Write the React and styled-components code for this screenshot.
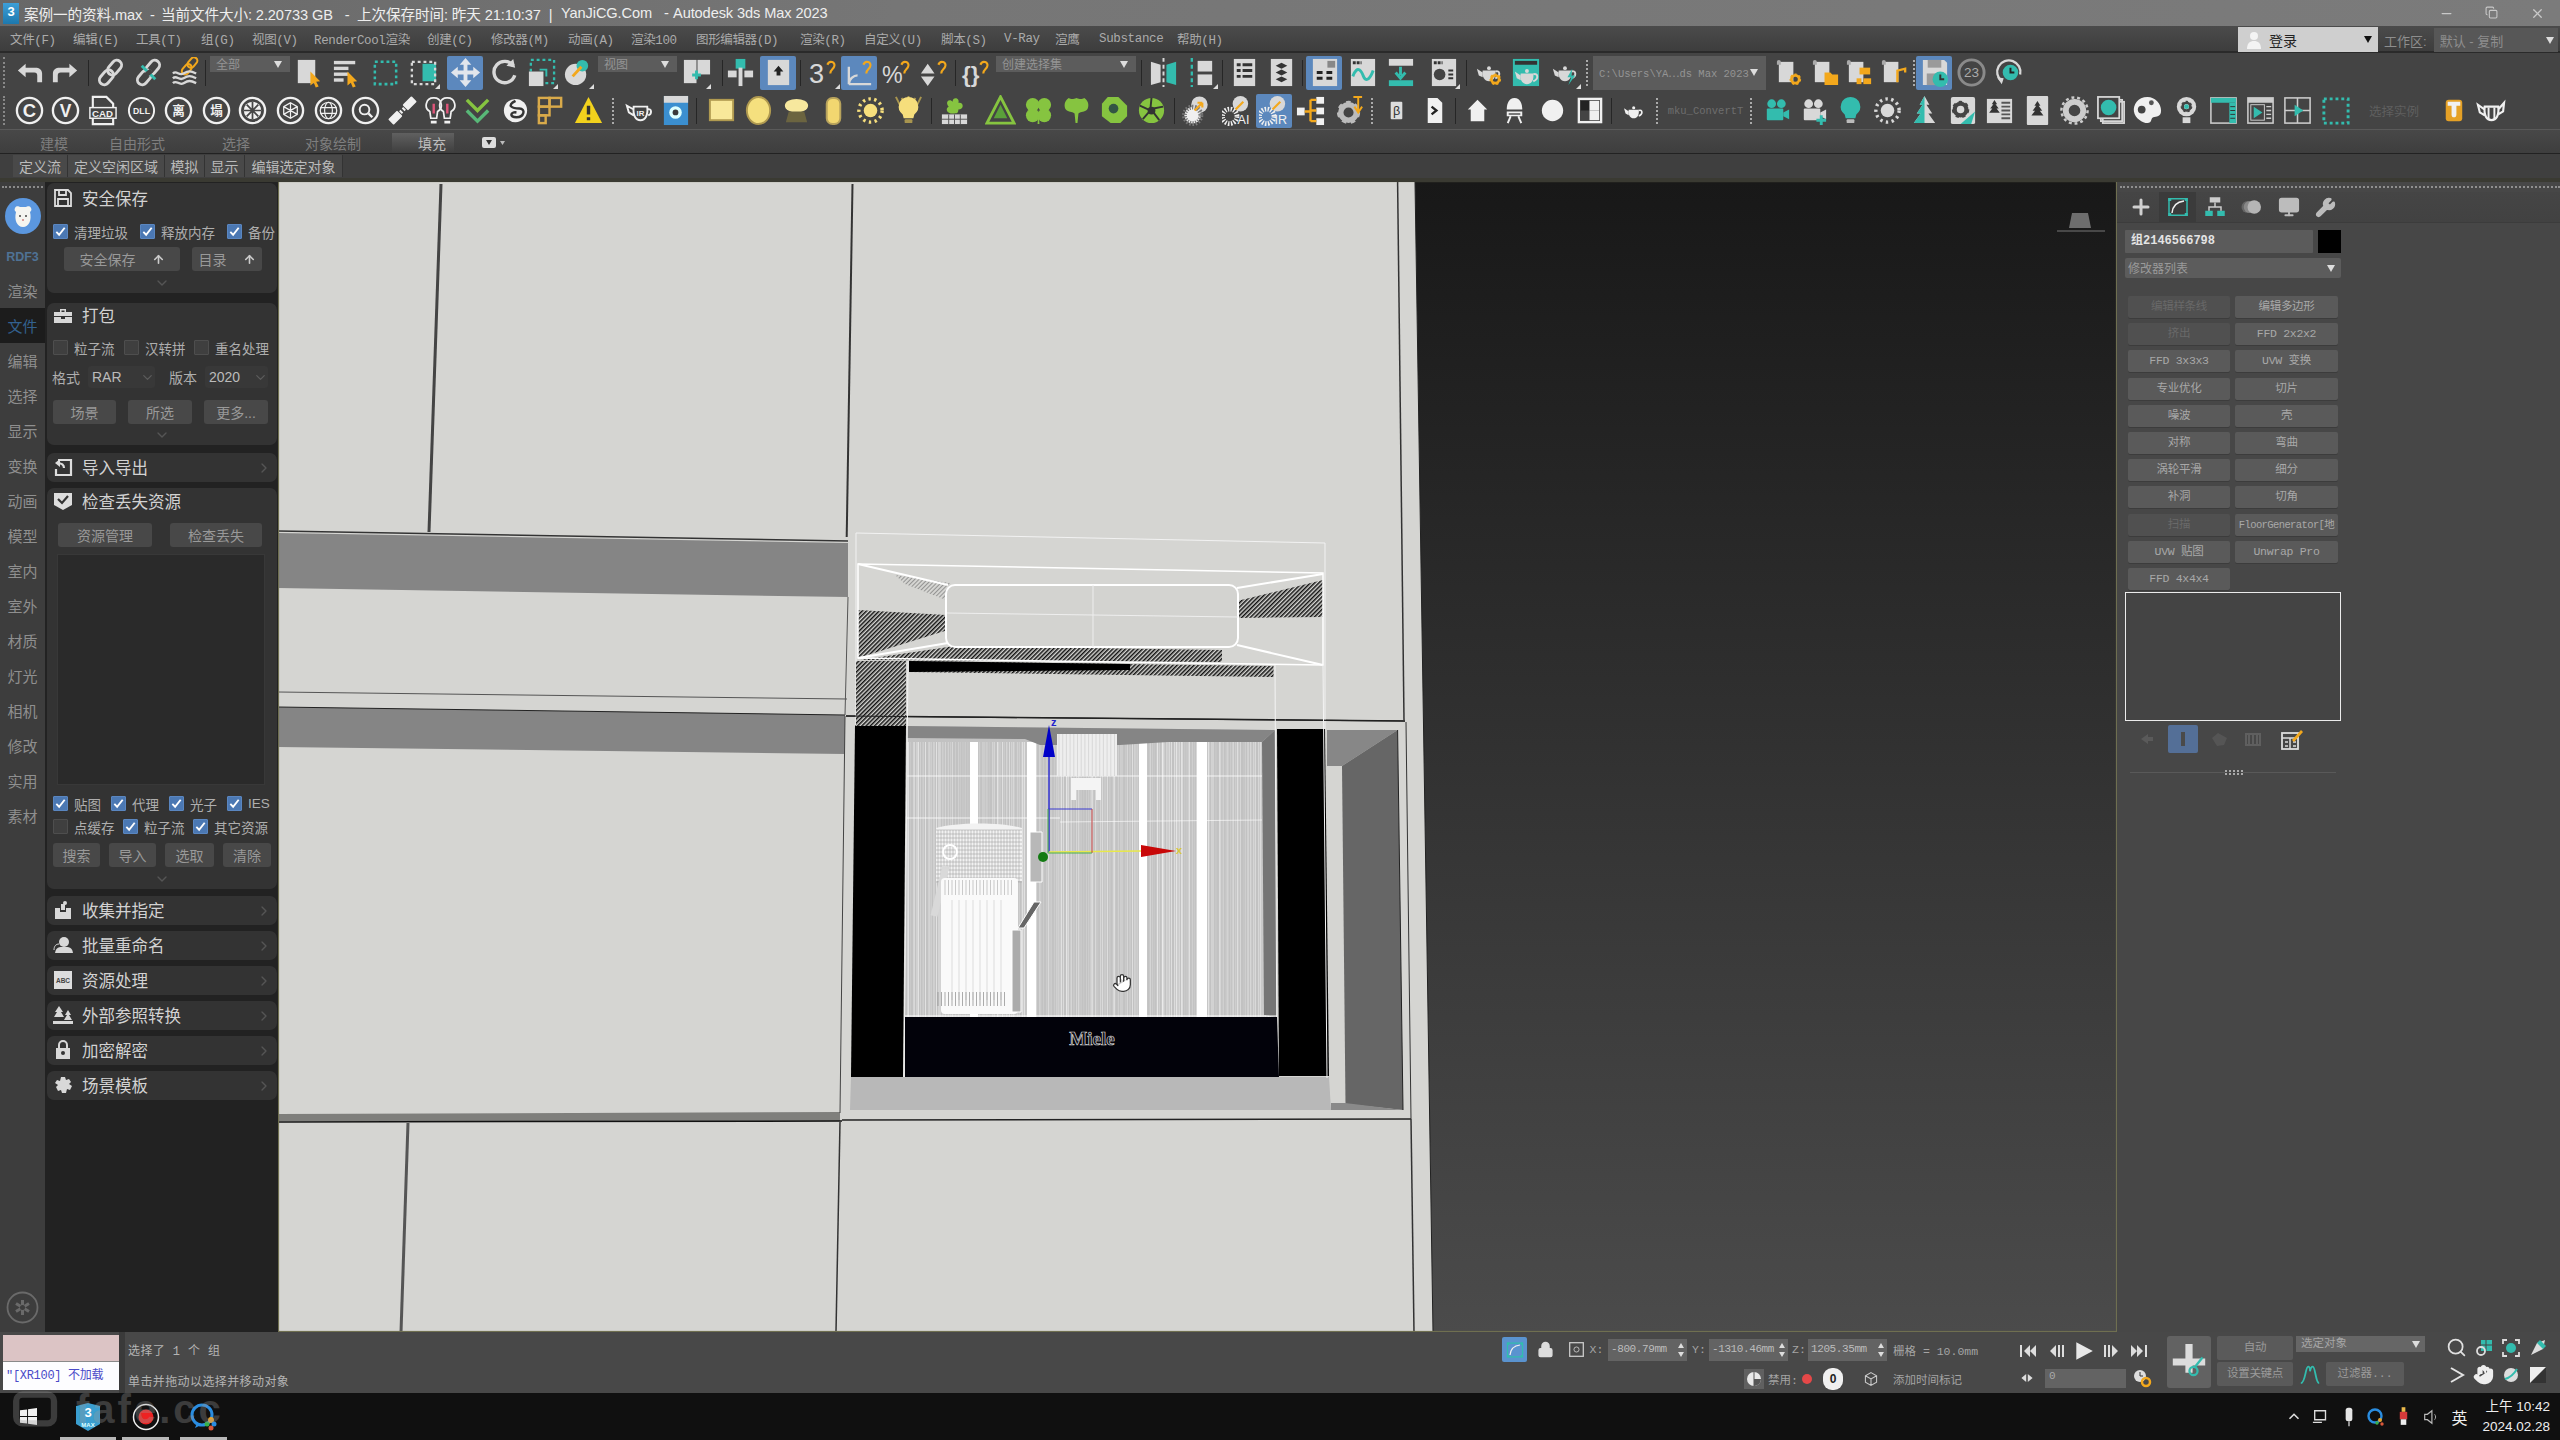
import React from 'react';
import styled, { createGlobalStyle } from 'styled-components';
import { Hand, Search, Minus, X, Copy, ChevronDown, ChevronRight, Plus, Lock, Wrench, Monitor, ArrowUp } from 'lucide-react';

const Global = createGlobalStyle`
  html,body{margin:0;padding:0;background:#444;}
  #root{width:2560px;height:1440px;overflow:hidden;}
  *{box-sizing:border-box;}
`;
const SANS = '"Liberation Sans","Noto Sans CJK SC",sans-serif';
const MONO = '"Liberation Mono","Noto Sans CJK SC",monospace';
const T = '#33bcae', L = '#d8d8d8', O = '#f3a81c', Gn = '#86c440', W = '#f0f0f0';

/* ---------- icon drawings ---------- */
const pot = (c = L) => (<g fill={c}><path d="M10 14h13c1 7-2 11-6.500 11S9 21 10 14z" /><path d="M10 16 4 12l2 7 4 2z" /><circle cx="16.500" cy="11.500" r="2" /><path d="M23 15c5-2 6 5 0 7" fill="none" stroke={c} strokeWidth="2" /></g>);
const hook = <path d="M20 8c2-5 9-3 7 2-1 3-4 3-4 7" fill="none" stroke={O} strokeWidth="2.200" />;
const gear = (x, y, r, c = O) => (<g><circle cx={x} cy={y} r={r} fill="none" stroke={c} strokeWidth={r * 0.7} /><circle cx={x} cy={y} r={r * 1.35} fill="none" stroke={c} strokeWidth={r * 0.3} strokeDasharray={`${r * 0.6} ${r * 0.6}`} /></g>);
const ct = (t, fs = 15, sw = 2.400) => (<g><circle cx="16" cy="16" r="13" fill="none" stroke={W} strokeWidth={sw} /><text x="16" y={16 + fs * 0.37} textAnchor="middle" fontSize={fs} fontWeight="700" fill={W} fontFamily={SANS}>{t}</text></g>);
const chain = (c = L) => (<g fill="none" stroke={c} strokeWidth="3" transform="rotate(-50 16 16)"><rect x="1" y="11" width="17" height="10" rx="5" /><rect x="14" y="11" width="17" height="10" rx="5" /></g>);
const scroll = (c) => (<g><path d="M5 5h15v21H5z" fill={L} /><path d="M3 5a2 2 0 0 1 4 0v3H3z" fill="#aaa" />{c}</g>);
const cam = (c) => (<g fill={c}><circle cx="11" cy="9" r="4.500" /><circle cx="21" cy="9" r="4.500" /><rect x="6" y="14" width="17" height="12" rx="1" /><path d="M23 18l6-3v10l-6-3z" /></g>);
const sun = (c) => (<g><circle cx="16" cy="16" r="7" fill={c} /><circle cx="16" cy="16" r="12" fill="none" stroke={c} strokeWidth="3.500" strokeDasharray="2.500 3.500" /></g>);
const bulb = (c, b = '#bbb') => (<g><path d="M16 2a10 10 0 0 1 6 18l-1 4H11l-1-4A10 10 0 0 1 16 2z" fill={c} /><rect x="12" y="25" width="8" height="4" rx="1" fill={b} /></g>);
const tree = (c) => <path d="M16 2l5 8h-3l6 8h-4l6 8H6l6-8H8l6-8h-3z" fill={c} />;
const G = {
  undo: <path fill={L} d="M12 7 4 14l8 7v-5h9c2 0 3 1 3 3v7h5v-9c0-4-3-6-7-6H12z" />,
  redo: <path fill={L} transform="translate(32 0) scale(-1 1)" d="M12 7 4 14l8 7v-5h9c2 0 3 1 3 3v7h5v-9c0-4-3-6-7-6H12z" />,
  link: chain(),
  unlink: <g>{chain()}<path d="M9 9l14 14" stroke={T} strokeWidth="3" /><path d="M19 14l-6 5" stroke="#444" strokeWidth="5" /></g>,
  bind: <g><g transform="translate(9 -2) scale(.7)">{chain(O)}</g><g fill="none" stroke={L} strokeWidth="2.400"><path d="M3 17c4-4 6 3 11 0s7-3 13 0" /><path d="M3 22c4-4 6 3 11 0s7-3 13 0" /><path d="M3 27c4-4 6 3 11 0s7-3 13 0" /></g></g>,
  select: <g><rect x="6" y="3" width="18" height="24" fill={L} /><path d="M19 15l10 10-4 .5 2.500 5-3 1-2-5-3.500 3z" fill={O} /></g>,
  selname: <g fill={L}><rect x="3" y="4" width="22" height="3.500" /><rect x="3" y="10" width="15" height="3.500" /><rect x="3" y="16" width="15" height="3.500" /><rect x="3" y="22" width="10" height="3.500" /><path d="M17 15l10 10-4 .5 2.500 5-3 1-2-5-3.500 3z" fill={O} /></g>,
  rect: <rect x="5" y="5" width="22" height="23" fill="none" stroke={T} strokeWidth="2.600" strokeDasharray="3 3" />,
  window: <g><rect x="15" y="7" width="14" height="18" fill={T} /><rect x="4" y="5" width="24" height="23" fill="none" stroke={L} strokeWidth="2.400" strokeDasharray="3 3" /></g>,
  move: <path fill="#e2e6ec" d="M16 1l6 7h-4v6h6v-4l7 6-7 6v-4h-6v6h4l-6 7-6-7h4v-6H8v4l-7-6 7-6v4h6V8h-4z" />,
  rotate: <g><path d="M23 7A11 11 0 1 0 27 16" transform="rotate(15 16 16)" fill="none" stroke={L} strokeWidth="3.500" /><path d="M18 9l7-7 2 9z" fill={L} /></g>,
  scale: <g><rect x="5" y="3" width="24" height="24" fill="none" stroke={T} strokeWidth="2.400" strokeDasharray="3 3" /><rect x="3" y="15" width="15" height="15" fill={L} /><path d="M14 13h7v7" fill="none" stroke={T} strokeWidth="2" /></g>,
  ref: <g><circle cx="14" cy="18" r="11" fill={L} /><circle cx="21" cy="9" r="6" fill={T} /><path d="M11 20l9-10" stroke={O} strokeWidth="3" /></g>,
  pivot: <g><rect x="3" y="3" width="13" height="24" fill={L} /><rect x="17" y="3" width="13" height="15" fill={L} /><path d="M16 14v9M11.500 18.500h9" stroke={T} strokeWidth="3" /></g>,
  manip: <g><rect x="11" y="2" width="10" height="10" fill={T} /><rect x="14" y="11" width="4" height="19" fill={L} /><rect x="3" y="14" width="9" height="7" fill={L} /><rect x="20" y="14" width="9" height="7" fill={L} /></g>,
  kbd: <g><rect x="5" y="3" width="22" height="26" fill={L} /><path d="M16 9l5 6h-3v4h-4v-4h-3z" fill="#222" /></g>,
  snap3: <g><text x="1" y="27" fontSize="28" fill={L} fontFamily={SANS}>3</text>{hook}</g>,
  angle: <g><path d="M5 28V10M5 28h23M5 28c0-5 5-9 9-9" fill="none" stroke={L} strokeWidth="2.400" />{hook}</g>,
  percent: <g><text x="0" y="27" fontSize="24" fill={L} fontFamily={SANS}>%</text>{hook}</g>,
  spin: <g><path d="M9 7l7 10H2zM9 30l7-10H2z" fill={L} />{hook}</g>,
  braces: <g><text x="1" y="26" fontSize="23" fontWeight="700" fill={L} fontFamily={SANS}>{'{}'}</text>{hook}</g>,
  mirror: <g><path d="M3 5l10 3v18l-10 3z" fill={L} /><path d="M16 1v30" stroke={L} strokeWidth="2" strokeDasharray="4 3" /><path d="M29 5l-10 3v18l10 3z" fill={T} /></g>,
  align: <g><path d="M6 1v30" stroke={T} strokeWidth="2.400" strokeDasharray="4 3" /><rect x="12" y="4" width="15" height="11" fill={L} /><rect x="12" y="18" width="15" height="11" fill={L} /></g>,
  layer: <g><rect x="5" y="2" width="22" height="28" fill={L} /><path d="M8 8h4M14 8h10M8 14h4M14 14h10M8 20h4M14 20h10" stroke="#333" strokeWidth="3" /></g>,
  stack: <g><rect x="5" y="2" width="22" height="28" fill={L} /><path d="M16 6l6 3-6 3-6-3zM16 13l6 3-6 3-6-3zM16 20l6 3-6 3-6-3z" fill="#333" /></g>,
  table: <g><rect x="4" y="2" width="25" height="28" fill={L} /><rect x="19" y="4" width="8" height="7" fill="#888" /><path d="M8 16h6M18 16h6M8 22h6M18 22h6" stroke="#222" strokeWidth="3" /></g>,
  curve: <g><rect x="4" y="2" width="25" height="28" fill={L} /><path d="M6 6h9" stroke="#333" strokeWidth="3" strokeDasharray="3 1" /><path d="M6 20c5-13 9-5 11 0s6 5 10-6" fill="none" stroke={T} strokeWidth="3" /></g>,
  dope: <g><rect x="4" y="2" width="25" height="7" fill={L} /><path d="M16 10v9M11 16l5 6 5-6" stroke={T} strokeWidth="3" fill="none" /><rect x="4" y="24" width="25" height="6" fill={T} /></g>,
  schem: <g><rect x="4" y="2" width="25" height="28" fill={L} /><path d="M6 6h9" stroke="#333" strokeWidth="3" strokeDasharray="3 1" /><circle cx="12" cy="18" r="6" fill="#444" /><path d="M21 14h5M21 18h5M21 22h5" stroke="#333" strokeWidth="2" /></g>,
  teaGear: <g>{pot()}{gear(23, 23, 4)}</g>,
  teaBox: <g><rect x="3" y="2" width="27" height="28" fill={T} /><rect x="5" y="4" width="23" height="4" fill="#333" /><g transform="translate(1 3)">{pot()}</g></g>,
  teaBolt: <g>{pot()}<path d="M24 12l-5 9h4l-3 8 7-10h-4z" fill={T} /></g>,
  scGear: scroll(gear(22, 23, 4)),
  scFolder: scroll(<path d="M15 16h6l2 2h6v11H15z" fill={O} />),
  scNet: scroll(<g fill={O}><rect x="16" y="11" width="11" height="7" /><rect x="20" y="22" width="8" height="6" /><rect x="13" y="22" width="5" height="6" /></g>),
  scNote: scroll(<path d="M19 26V14l8-2v4" stroke={O} strokeWidth="2.400" fill="none" />),
  saveClock: <g><path d="M4 3h22l3 3v23H4z" fill={L} /><rect x="9" y="3" width="14" height="8" fill="#9a9a9a" /><rect x="8" y="17" width="10" height="12" fill="#9a9a9a" /><circle cx="22" cy="23" r="8" fill={T} /><path d="M22 18v5h4" stroke="#333" strokeWidth="2" fill="none" /></g>,
  c23: <g><circle cx="16" cy="16" r="13" fill="none" stroke="#8a8a8a" strokeWidth="3" /><text x="16" y="21" textAnchor="middle" fontSize="14" fill="#aaa" fontFamily={SANS}>23</text></g>,
  clockR: <g><path d="M8 25A12 12 0 1 1 27 18" fill="none" stroke={L} strokeWidth="2.400" /><path d="M3 21l7 1-2 6z" fill={L} /><circle cx="17" cy="16" r="8" fill={T} /><path d="M17 11v5h4" stroke="#222" strokeWidth="2" fill="none" /></g>,
  c: ct('C', 19), v: ct('V', 18), dll: ct('DLL', 9, 2), li: ct('离', 13), ta: ct('塌', 13),
  cad: <g><path d="M6 2h14l7 7v21H6z" fill="none" stroke={W} strokeWidth="2.200" /><rect x="3" y="13" width="27" height="11" fill="#444" stroke={W} strokeWidth="1.500" /><text x="16" y="22.500" textAnchor="middle" fontSize="10" fontWeight="700" fill={W} fontFamily={SANS}>CAD</text></g>,
  wheel: <g><circle cx="16" cy="16" r="13" fill="none" stroke={W} strokeWidth="2.400" /><circle cx="16" cy="16" r="9" fill={W} /><path d="M16 7v18M7 16h18M10 10l12 12M22 10L10 22" stroke="#444" strokeWidth="1.800" /></g>,
  mesh: <g><circle cx="16" cy="16" r="13" fill="none" stroke={W} strokeWidth="2.400" /><path d="M16 8l7 4v8l-7 4-7-4v-8zM9 12l14 8M23 12L9 20M16 8v16" fill="none" stroke={W} strokeWidth="1.300" /></g>,
  globe: <g><circle cx="16" cy="16" r="13" fill="none" stroke={W} strokeWidth="2.400" /><circle cx="16" cy="16" r="8.500" fill="none" stroke={W} strokeWidth="1.300" /><ellipse cx="16" cy="16" rx="4" ry="8.500" fill="none" stroke={W} strokeWidth="1.200" /><path d="M7.500 13h17M7.500 19h17" stroke={W} strokeWidth="1.200" /></g>,
  sea: <g><circle cx="16" cy="16" r="13" fill="none" stroke={W} strokeWidth="2.400" /><circle cx="15" cy="15" r="5" fill="none" stroke={W} strokeWidth="2" /><path d="M19 19l4 4" stroke={W} strokeWidth="2.400" /></g>,
  broken: <g transform="rotate(-45 16 16)" fill={W}><rect x="-1" y="12" width="13" height="8" rx="1" /><rect x="20" y="12" width="13" height="8" rx="1" /><rect x="13" y="14" width="2" height="4" /><rect x="17" y="14" width="2" height="4" /></g>,
  bulbs: <g fill="none" stroke={W} strokeWidth="1.800"><path d="M9 3a7.500 7.500 0 0 1 4 14l-1 7H6l-1-7A7.500 7.500 0 0 1 9 3z" /><path d="M23 3a7.500 7.500 0 0 1 4 14l-1 7h-6l-1-7A7.500 7.500 0 0 1 23 3z" /><path d="M9 9v10M23 9v10" stroke="#e0557a" strokeWidth="2.500" /><path d="M6 28h6M20 28h6" strokeWidth="3" /></g>,
  chev: <g fill="none" stroke={Gn} strokeWidth="3.500"><path d="M5 5l11 11L27 5" /><path d="M5 16l11 11 11-11" stroke="#58b878" /></g>,
  swirl: <g><circle cx="16" cy="16" r="12" fill={W} /><path d="M16 6c-10 5-3 8 4 8s5 9-3 9-6-6 0-5" fill="none" stroke="#333" strokeWidth="2.500" /></g>,
  blocks: <g fill="none" stroke="#d9aa4a" strokeWidth="2.500"><rect x="4" y="3" width="11" height="9" /><rect x="15" y="3" width="12" height="9" /><rect x="4" y="12" width="11" height="9" /><rect x="4" y="21" width="7" height="8" /></g>,
  warn: <g><path d="M16 2l14 27H2z" fill="#f2d21d" /><path d="M16 11v9M16 23v3" stroke="#333" strokeWidth="3.500" /></g>,
  teaIR: <g><path d="M10 12h14c1 9-2 14-7 14s-8-5-7-14zM10 15L3 11l2 7 5 3M24 15c5-2 5 5 1 6" fill="none" stroke={W} strokeWidth="2" /><text x="17" y="22" textAnchor="middle" fontSize="8" fontWeight="700" fill={W} fontFamily={SANS}>IR</text></g>,
  washer: <g><rect x="4" y="1" width="25" height="30" fill="#3b8fd0" /><rect x="4" y="1" width="25" height="7" fill={L} /><circle cx="16" cy="18" r="6.500" fill="#dff" /><circle cx="16" cy="18" r="3" fill="#3a3a3a" /></g>,
  yRect: <rect x="4" y="5" width="24" height="21" fill="#f8e89a" stroke="#b09a50" strokeWidth="2" />,
  yCirc: <ellipse cx="16" cy="16" rx="12" ry="14" fill="#f5e07e" stroke="#b09a50" strokeWidth="2" />,
  ySpot: <g><ellipse cx="16" cy="11" rx="12" ry="7" fill="#f7e89e" /><path d="M8 17l-3 11h22l-3-11z" fill="#6b6440" /></g>,
  yCyl: <g><rect x="9" y="3" width="14" height="27" rx="6" fill="#f2d770" stroke="#b8a35c" strokeWidth="2" /></g>,
  ySun: sun('#f6de7c'),
  yBulb: <g><path d="M3 2l6 12M29 2l-6 12M16 1v10M9 3l3 9M23 3l-3 9" stroke="#a8954f" strokeWidth="2" />{bulb('#f6de7c', '#a8954f')}</g>,
  gridG: <g><rect x="3" y="20" width="26" height="10" fill={L} /><path d="M3 25h26M10 20v10M16 20v10M22 20v10" stroke="#555" /><path d="M16 19C8 20 6 14 10 12 6 8 10 3 14 7c0-6 8-4 6 1 6-1 6 7 0 7 0 4-2 4-4 4z" fill={Gn} /></g>,
  gTri: <g><path d="M16 2l14 27H2z" fill="none" stroke={Gn} strokeWidth="3" /><path d="M16 10l7 14H9z" fill="#5aa03a" /></g>,
  clover: <g fill={Gn}><circle cx="10" cy="10" r="7" /><circle cx="22" cy="10" r="7" /><circle cx="10" cy="21" r="7" /><circle cx="22" cy="21" r="7" /><path d="M16 14l1 16h-2z" /></g>,
  bush: <path fill={Gn} d="M8 3c3 2 5 1 8 0 3 1 5 2 8 0 5 3 5 9 3 12-3 3-6 2-9 4l-1 10h-2l-1-10c-3-2-6-1-9-4C3 12 3 6 8 3z" />,
  donut: <g><path d="M9 2h11l9 9v11l-7 7H12l-9-7V9z" fill={Gn} /><circle cx="15" cy="14" r="5" fill="#354" /></g>,
  aper: <g><circle cx="16" cy="16" r="13" fill={Gn} /><path d="M16 3l-1 10M28 12l-10 2M24 26l-6-8M7 25l7-8M4 11l9 4" stroke="#333" strokeWidth="2" /><circle cx="16" cy="16" r="4" fill="#333" /></g>,
  ballA: <g><circle cx="18" cy="10" r="8.500" fill={L} /><circle cx="11" cy="21" r="8.500" fill={W} /><circle cx="11" cy="21" r="8.500" fill="none" stroke="#777" strokeDasharray="1.500 1.500" strokeWidth="5" /><path d="M13 16l8-8M21 8h-5M21 8v5" stroke={O} strokeWidth="2.200" fill="none" /></g>,
  ballAI: <g><circle cx="19" cy="9" r="8" fill={L} /><circle cx="8" cy="22" r="7.500" fill="none" stroke={W} strokeWidth="5" strokeDasharray="1.500 1.500" /><path d="M14 15l8-8" stroke={O} strokeWidth="2.200" /><text x="16" y="30" fontSize="13" fill={W} fontFamily={SANS}>AI</text></g>,
  ballIR: <g><circle cx="19" cy="9" r="8" fill={L} /><circle cx="8" cy="22" r="7.500" fill="none" stroke={W} strokeWidth="5" strokeDasharray="1.500 1.500" /><path d="M14 15l8-8" stroke={O} strokeWidth="2.200" /><text x="16" y="30" fontSize="13" fill={W} fontFamily={SANS}>IR</text></g>,
  treeO: <g fill={W}><rect x="2" y="13" width="8" height="8" /><rect x="22" y="2" width="8" height="7" /><rect x="22" y="13" width="8" height="7" /><rect x="22" y="24" width="8" height="7" /><path d="M10 17h6M16 5v22M16 5h6M16 16h6M16 27h6" stroke={O} strokeWidth="2.400" fill="none" /></g>,
  spinG: <g>{gear(15, 18, 8, '#bbb')}<path d="M20 2h9M25 2v15M21 12l4 6 4-6" stroke={O} strokeWidth="2" fill="none" /></g>,
  fb: <g><rect x="10" y="7" width="12" height="18" rx="1" fill="#ddd" /><text x="16" y="21" textAnchor="middle" fontSize="13" fill="#333" fontFamily={SANS}>β</text></g>,
  fs: <g><path d="M9 3h10l5 5v21H9z" fill={W} /><path d="M13 12l5 4-5 4" stroke="#222" strokeWidth="2.400" fill="none" /></g>,
  house: <path d="M16 5l10 10h-3v12H9V15H6z" fill={W} />,
  caps: <g><path d="M16 3c6 0 8 6 8 12H8C8 9 10 3 16 3z" fill={W} /><path d="M9 18h14v3H9zM12 22l-3 7M20 22l3 7" stroke={W} strokeWidth="2" /></g>,
  ball: <circle cx="16" cy="16" r="11" fill={W} />,
  check: <g><rect x="5" y="4" width="23" height="24" fill="none" stroke={W} strokeWidth="2.400" /><rect x="7" y="6" width="9" height="10" fill="#222" /><rect x="16" y="16" width="10" height="10" fill={W} /><rect x="16" y="6" width="10" height="10" fill={W} /></g>,
  potS: <g transform="translate(3 4) scale(.8)">{pot(W)}</g>,
  camT: <g>{cam(T)}</g>,
  camA: <g>{cam(L)}<path d="M24 21v10M19 26h10" stroke={T} strokeWidth="3" /></g>,
  bulbT: bulb(T),
  sunT: sun(L),
  treeT: <g><path d="M16 1l5 9h-3l6 9h-4l7 10H5l7-10H8l6-9h-3z" fill={L} /><path d="M16 1l-5 9h3l-6 9h4L5 29h11z" fill={T} /></g>,
  gearT: <g><rect x="4" y="2" width="25" height="28" fill={L} rx="2" />{gear(14, 15, 6, '#444')}<path d="M29 17l-4 13H14z" fill={T} /></g>,
  listT: <g><rect x="3" y="4" width="26" height="25" fill={L} /><g transform="translate(2 4) scale(.55)">{tree('#333')}</g><path d="M18 8h9M18 12h9M18 16h9M18 20h9M18 24h9" stroke="#555" strokeWidth="2" /></g>,
  cardT: <g><rect x="5" y="1" width="22" height="30" rx="1" fill={L} /><g transform="translate(6 5) scale(.62)">{tree('#333')}</g></g>,
  saw: <g><circle cx="16" cy="16" r="9" fill="none" stroke="#ccc" strokeWidth="6" /><circle cx="16" cy="16" r="13.500" fill="none" stroke="#ccc" strokeWidth="2.500" strokeDasharray="3 3" /></g>,
  stackB: <g fill="none" stroke={L} strokeWidth="1.800"><rect x="7" y="7" width="22" height="22" /><rect x="5" y="5" width="22" height="22" /><rect x="2" y="2" width="22" height="22" fill="#444" /><circle cx="13" cy="13" r="8" fill={T} stroke="none" /></g>,
  pal: <g><path d="M16 2C6 2 1 10 2 17s9 12 14 12 3-5 6-6 8 0 8-7S24 2 16 2z" fill={W} /><circle cx="10" cy="15" r="4" fill="#444" /><circle cx="20" cy="8" r="2.500" fill="#555" /></g>,
  bulbG: <g><circle cx="16" cy="12" r="10" fill={L} />{gear(16, 12, 4, '#444')}<circle cx="16" cy="12" r="2.500" fill={T} /><rect x="12" y="23" width="8" height="6" fill={L} /></g>,
  winT: <g><rect x="3" y="3" width="26" height="26" fill="#444" stroke="#ccc" strokeWidth="1.600" /><rect x="3" y="3" width="26" height="5" fill={T} /><rect x="22" y="8" width="7" height="21" fill={T} /><path d="M23 12h5M23 16h5M23 20h5M23 24h5" stroke="#333" /></g>,
  playW: <g><rect x="3" y="3" width="26" height="26" fill="#444" stroke="#ccc" strokeWidth="1.600" /><rect x="3" y="3" width="26" height="5" fill="#ccc" /><rect x="6" y="10" width="14" height="16" fill="none" stroke="#ccc" /><path d="M9 12l9 6-9 6z" fill={T} /><path d="M22 12h5M22 16h5M22 20h5M22 24h5" stroke="#ccc" strokeWidth="1.500" /></g>,
  crossW: <g><rect x="3" y="3" width="26" height="26" fill="none" stroke="#ccc" strokeWidth="1.600" /><path d="M16 3v26M3 16h26" stroke="#ccc" strokeWidth="1.600" /><path d="M13 10l9 6-9 6z" fill={T} /></g>,
  dashT: <rect x="4" y="4" width="25" height="25" fill="none" stroke={T} strokeWidth="3" strokeDasharray="3 3" />,
  uMat: <g><rect x="8" y="5" width="17" height="22" rx="3" fill="#e5a126" /><path d="M10 7h13v4h-4v9c0 2-1 3-2.500 3S14 22 14 20v-9h-4z" fill={W} /></g>,
  potO: <g><path d="M10 12h14c1 9-2 14-7 14s-8-5-7-14zM10 15L3 10l2 8 5 3M24 15l6-7-1 9-5 3" fill="none" stroke={W} strokeWidth="2.200" /><path d="M14 13v12M20 13v12" stroke={W} strokeWidth="2" /></g>,
  tabCurve: <g><rect x="4" y="5" width="24" height="22" fill="none" stroke={T} strokeWidth="2" /><path d="M8 24C9 14 15 9 24 8" fill="none" stroke={W} strokeWidth="2" /><path d="M3 4h4v4H3zM25 4h4v4h-4zM3 24h4v4H3zM25 24h4v4h-4z" fill={T} /></g>,
  tabHier: <g><rect x="9" y="3" width="14" height="7" fill="#ccc" /><rect x="3" y="21" width="10" height="7" fill={T} /><rect x="19" y="21" width="10" height="7" fill={T} /><path d="M16 10v6M8 21v-5h16v5" stroke="#ccc" strokeWidth="2" fill="none" /></g>,
  tabMotion: <g><circle cx="10" cy="16" r="8" fill="#666" /><circle cx="13" cy="16" r="8" fill="#888" /><circle cx="19" cy="16" r="9" fill="#b5b5b5" /></g>,
};
const Ic = ({ k, s = 32 }) => <svg viewBox="0 0 32 32" width={s} height={s}>{G[k]}</svg>;

/* ---------- page shell ---------- */
const Page = styled.div`width:2560px;height:1440px;display:flex;flex-direction:column;background:#444;position:relative;overflow:hidden;font-family:${SANS};`;
const TitleBar = styled.div`height:26px;flex:none;display:flex;align-items:center;background:linear-gradient(90deg,#686868 0,#767676 35%,#7b7b7b 100%);color:#e8e8e8;font:14.600px ${SANS};`;
const AppBadge = styled.div`width:16px;height:21px;margin:0 5px 0 3px;background:linear-gradient(#3d9fd8,#1d78ad);color:#fff;font:700 13px/18px ${SANS};text-align:center;flex:none;`;
const TitleSeg = styled.div`width:${p => p.$w}px;flex:none;white-space:pre;color:#eee;letter-spacing:-.1px;`;
const TitleFill = styled.div`flex:1;`;
const WinBtns = styled.div`display:flex;color:#ddd;width:136px;`;
const WinBtn = styled.div`width:54px;display:flex;justify-content:center;opacity:.8;`;
const MenuBar = styled.div`height:27px;flex:none;display:flex;align-items:center;background:linear-gradient(#4b4b4b,#3d3d3d);border-bottom:2px solid #2a2a2a;position:relative;padding-left:10px;`;
const Menu = styled.div`flex:none;width:${p => p.$w}px;color:#ababab;font:12.500px ${MONO};letter-spacing:-.35px;white-space:nowrap;`;
const LoginWrap = styled.div`position:absolute;left:2238px;top:1px;height:25px;width:140px;background:#cfcfcf;color:#222;display:flex;align-items:center;font:14px ${SANS};padding:0 6px 0 7px;gap:6px;`;
const LoginText = styled.span`flex:1;`;
const Workspace = styled.div`position:absolute;left:2384px;top:2px;height:24px;display:flex;align-items:center;color:#8e8e8e;font:13px ${SANS};gap:7px;`;
const WsDrop = styled.div`width:124px;height:24px;background:#575757;display:flex;align-items:center;justify-content:space-between;padding:0 4px 0 6px;`;
const Caret = styled.span`width:0;height:0;flex:none;border-left:4px solid transparent;border-right:4px solid transparent;border-top:7px solid ${p => p.$c || '#ddd'};`;
const Rows = styled.div`flex:none;background:#444;`;
const ToolRow = styled.div`height:${p => p.$h}px;display:flex;align-items:center;position:relative;`;
const Slot = styled.div.attrs(p => ({ style: { marginLeft: p.$ml, width: p.$w } }))`flex:none;height:${p => p.$bh || 34}px;display:flex;align-items:center;justify-content:center;position:relative;border-radius:2px;
  background:${p => (p.$on ? '#5c88bd' : 'transparent')};
  ${p => p.$fly ? `&::after{content:"";position:absolute;right:1px;bottom:1px;border-left:5px solid transparent;border-bottom:5px solid #ddd;}` : ''}`;
const Drop = styled.div.attrs(p => ({ style: { marginLeft: p.$ml, width: p.$w } }))`flex:none;height:${p => p.$bh || 16}px;background:#5c5c5c;color:#949494;font:${p => p.$fs || 12}px ${MONO};display:flex;align-items:center;justify-content:space-between;padding:0 8px 0 6px;align-self:${p => p.$top ? 'flex-start' : 'center'};margin-top:${p => p.$top ? '3px' : '0'};white-space:nowrap;overflow:hidden;`;
const Sep = styled.div.attrs(p => ({ style: { marginLeft: p.$ml } }))`flex:none;width:1px;height:26px;background:${p => p.$dot ? 'transparent' : '#262626'};border-left:${p => p.$dot ? '2px dotted #aaa' : '0'};`;
const Ghost = styled.div.attrs(p => ({ style: { marginLeft: p.$ml, width: p.$w } }))`flex:none;color:${p => p.$c || '#666'};font:${p => p.$fs || 11}px ${MONO};white-space:nowrap;text-align:center;`;
const Grip = styled.div`position:absolute;left:3px;top:4px;bottom:4px;width:2px;border-left:2px dotted #888;`;

const layout = (items) => {
  let cur = 0;
  return items.map((it, i) => {
    if (it.sep !== undefined) { const ml = it.sep - cur; cur = it.sep + 1; return <Sep key={i} $ml={ml} $dot={it.dot} />; }
    if (it.d) { const ml = it.d[0] - cur; cur = it.d[1]; return <Drop key={i} $ml={ml} $w={it.d[1] - it.d[0]} $bh={it.bh} $top={it.top} $fs={it.fs}><span>{it.text}</span><Caret /></Drop>; }
    if (it.g) { const ml = it.g[0] - cur; cur = it.g[1]; return <Ghost key={i} $ml={ml} $w={it.g[1] - it.g[0]} $c={it.c} $fs={it.fs}>{it.text}</Ghost>; }
    const w = it.w || 36; const l = it.c - w / 2; const ml = l - cur; cur = l + w;
    return <Slot key={i} $ml={ml} $w={w} $on={it.on} $fly={it.fly} $bh={it.bh}><Ic k={it.k} s={it.s || 31} /></Slot>;
  });
};
const ic = (c, k, o = {}) => ({ c, k, ...o });
const row1 = [
  ic(29, 'undo'), ic(65, 'redo'), { sep: 88 }, ic(110, 'link'), ic(148, 'unlink'), ic(185, 'bind'), { sep: 205 },
  { d: [210, 290], text: '全部', top: 1 }, ic(307, 'select'), ic(346, 'selname'), ic(385, 'rect'), ic(423, 'window', { fly: 1 }),
  ic(465, 'move', { on: 1 }), ic(504, 'rotate'), ic(541, 'scale', { fly: 1 }), ic(577, 'ref', { fly: 1 }),
  { d: [598, 677], text: '视图', top: 1 }, ic(696, 'pivot', { fly: 1, w: 32 }), { sep: 722 }, ic(740, 'manip', { w: 34 }), ic(778, 'kbd', { on: 1, w: 36 }),
  { sep: 800 }, ic(823, 'snap3', { fly: 1 }), ic(859, 'angle', { on: 1 }), ic(897, 'percent'), ic(934, 'spin'), { sep: 955 }, ic(976, 'braces', { w: 34 }),
  { d: [996, 1136], text: '创建选择集', top: 1 }, { sep: 1141 }, ic(1163, 'mirror'), ic(1201, 'align', { fly: 1 }), { sep: 1222 }, ic(1244, 'layer'), ic(1281, 'stack'), { sep: 1302 },
  ic(1324, 'table', { on: 1 }), ic(1362, 'curve'), ic(1400, 'dope'), ic(1443, 'schem', { fly: 1 }), { sep: 1466 }, ic(1488, 'teaGear'), ic(1525, 'teaBox'), ic(1564, 'teaBolt', { fly: 1 }), { sep: 1586, dot: 1 },
  { d: [1592, 1765], text: 'C:\\Users\\YA⋯ds Max 2023', bh: 34, fs: 10.5 }, ic(1788, 'scGear'), ic(1824, 'scFolder'), ic(1858, 'scNet'), ic(1893, 'scNote'), { sep: 1912, dot: 1 },
  ic(1932, 'saveClock', { on: 1 }), ic(1969, 'c23'), ic(2007, 'clockR'),
];
const row2 = [
  ic(29, 'c'), ic(65, 'v'), ic(102, 'cad'), ic(141, 'dll'), ic(178, 'li'), ic(216, 'ta'), ic(252, 'wheel'), ic(290, 'mesh'), ic(328, 'globe'), ic(365, 'sea'),
  ic(402, 'broken'), ic(440, 'bulbs'), ic(477, 'chev'), ic(515, 'swirl'), ic(550, 'blocks'), ic(588, 'warn'), { sep: 612, dot: 1 }, ic(638, 'teaIR'), ic(674, 'washer'),
  { sep: 695 }, ic(720, 'yRect'), ic(757, 'yCirc'), ic(795, 'ySpot'), ic(832, 'yCyl'), ic(869, 'ySun'), ic(907, 'yBulb'), { sep: 930 }, ic(953, 'gridG'), ic(999, 'gTri'), ic(1037, 'clover'), ic(1075, 'bush'), ic(1113, 'donut'), ic(1150, 'aper'),
  { sep: 1173 }, ic(1196, 'ballA'), ic(1236, 'ballAI'), ic(1273, 'ballIR', { on: 1 }), ic(1309, 'treeO'), ic(1348, 'spinG'), { sep: 1370, dot: 1 }, ic(1394, 'fb'), ic(1432, 'fs'), { sep: 1453 },
  ic(1475, 'house'), ic(1512, 'caps'), ic(1550, 'ball'), ic(1587, 'check'), { sep: 1609 }, ic(1631, 'potS'), { sep: 1654, dot: 1 },
  { g: [1660, 1745], text: 'mku_ConvertT', c: '#6e6e6e', fs: 10.5 }, { sep: 1747, dot: 1 }, ic(1772, 'camT'), ic(1809, 'camA'), ic(1846, 'bulbT'), ic(1883, 'sunT'), ic(1920, 'treeT'), ic(1958, 'gearT'), ic(1995, 'listT'), ic(2033, 'cardT'),
  ic(2070, 'saw'), ic(2107, 'stackB'), ic(2143, 'pal'), ic(2182, 'bulbG'), ic(2219, 'winT'), ic(2256, 'playW'), ic(2293, 'crossW'), ic(2331, 'dashT'),
  { g: [2360, 2420], text: '选择实例', c: '#5f5f5f', fs: 12.5 }, ic(2449, 'uMat'), ic(2486, 'potO'),
];
const menus = [['文件(F)', 10], ['编辑(E)', 73], ['工具(T)', 136], ['组(G)', 201], ['视图(V)', 252], ['RenderCool渲染', 314], ['创建(C)', 427], ['修改器(M)', 491], ['动画(A)', 568], ['渲染100', 631], ['图形编辑器(D)', 696], ['渲染(R)', 800], ['自定义(U)', 864], ['脚本(S)', 941], ['V-Ray', 1004], ['渲鹰', 1055], ['Substance', 1099], ['帮助(H)', 1177]];

const TabsBar = styled.div`height:25px;flex:none;display:flex;align-items:flex-end;background:linear-gradient(#484848,#3e3e3e);border-top:1px solid #5a5a5a;border-bottom:1px solid #222;padding-left:20px;`;
const RTab = styled.div`height:20px;width:${p => p.$w}px;padding-left:${p => p.$pl || 0}px;display:flex;align-items:center;justify-content:center;color:${p => p.$on ? '#bdbdbd' : '#7e7e7e'};font:14px ${SANS};background:${p => p.$on ? 'linear-gradient(#606060,#3e3e3e)' : 'transparent'};margin-left:${p => p.$ml || 0}px;`;
const SubBar = styled.div`height:24px;flex:none;display:flex;align-items:center;background:#3f3f3f;padding:0 0 0 13px;`;
const SubBtn = styled.div`height:22px;width:${p => p.$w}px;background:#494949;border-right:1px solid #333;color:#bbb;font:14px ${SANS};display:flex;align-items:center;justify-content:center;`;
const Strip = styled.div`height:4px;flex:none;background:#3a3a32;`;

/* ---------- left ---------- */
const Main = styled.div`height:1150px;flex:none;display:flex;overflow:hidden;`;
const LeftStrip = styled.div`width:45px;flex:none;background:#3d3d3d;display:flex;flex-direction:column;align-items:stretch;position:relative;`;
const Dots = styled.div`height:2px;margin:4px 2px 0;border-top:2px dotted #8a8a8a;flex:none;`;
const BearWrap = styled.div`margin:9px 0 0 4px;width:38px;height:38px;flex:none;`;
const Rdf = styled.div`margin:15px 0 8px;height:15px;flex:none;text-align:center;font:700 12.500px/15px ${SANS};color:#4f7295;`;
const NavItem = styled.div`height:35px;flex:none;display:flex;align-items:center;justify-content:center;font:15px ${SANS};color:${p => p.$on ? '#33618f' : '#8f8f8f'};background:${p => p.$on ? '#1c1c1c' : 'transparent'};`;
const NavGear = styled.div`position:absolute;left:6px;bottom:8px;width:33px;height:33px;`;
const LeftPanel = styled.div`width:233px;flex:none;background:#222;padding:1px 1px 0 2px;display:flex;flex-direction:column;`;
const Card = styled.div`height:${p => p.$h}px;margin-bottom:${p => p.$mb}px;background:#333;border-radius:7px;flex:none;display:flex;flex-direction:column;color:#bdbdbd;position:relative;`;
const CardHead = styled.div`height:${p => p.$h}px;flex:none;display:flex;align-items:center;padding:0 0 2px 6px;gap:9px;color:#d2d2d2;font:16.500px ${SANS};`;
const HeadIcon = styled.div`width:20px;height:20px;flex:none;`;
const ChevR = styled.div`position:absolute;right:5px;top:50%;transform:translateY(-50%);color:#555;display:flex;`;
const ChevD = styled.div`position:absolute;left:50%;bottom:${p => p.$b ?? 2}px;transform:translateX(-50%);color:#555;display:flex;`;
const CheckRow = styled.div`display:flex;height:15px;flex:none;margin-top:${p => p.$mt}px;padding-left:6px;`;
const CheckItem = styled.div`width:${p => p.$w}px;flex:none;display:flex;align-items:center;gap:6px;color:#aeaeae;font:13.500px ${SANS};white-space:nowrap;`;
const Box = styled.div`width:15px;height:15px;flex:none;border-radius:1px;background:${p => p.$on ? '#4b78b3' : '#3f3f3f'};border:1px solid ${p => p.$on ? '#5a86c0' : '#4e4e4e'};display:flex;align-items:center;justify-content:center;`;
const BtnRow = styled.div`display:flex;flex:none;margin-top:${p => p.$mt}px;padding-left:${p => p.$pl}px;gap:${p => p.$gap}px;`;
const PBtn = styled.div`width:${p => p.$w}px;height:24px;border-radius:3px;background:#484848;color:#999;font:14px ${SANS};display:flex;align-items:center;justify-content:center;gap:${p => p.$ic ? 16 : 0}px;`;
const SelRow = styled.div`display:flex;align-items:center;height:22px;flex:none;margin-top:${p => p.$mt}px;padding-left:5px;font:14px ${SANS};color:#aeaeae;`;
const SelLabel = styled.div`width:36px;flex:none;`;
const Sel = styled.div`width:${p => p.$w}px;margin-right:${p => p.$mr}px;height:22px;background:#383838;border-radius:3px;padding-left:4px;display:flex;align-items:center;justify-content:space-between;color:#bbb;font:14px ${SANS};svg{color:#5c5c5c;}`;
const Area = styled.div`margin:7px 12px 0 10px;height:231px;flex:none;background:#2a2a2a;border:1px solid #383838;`;

const check = <svg viewBox="0 0 14 14" width="13" height="13"><path d="M2.500 7.500l3 3 6-7.500" fill="none" stroke="#fff" strokeWidth="2" /></svg>;
const Chk = ({ on, w, children }) => <CheckItem $w={w}><Box $on={on}>{on && check}</Box>{children}</CheckItem>;
const hi = {
  save: <g fill="none" stroke="#ddd" strokeWidth="1.800"><path d="M2 2h13l3 3v13H2z" /><path d="M6 2v5h7V2M5 18v-7h10v7" /></g>,
  box: <g fill="#d8d8d8"><path d="M1 7h18v4H1z" /><path d="M1 12h7v2h4v-2h7v6H1z" /><path d="M7 7V4h6v3h-1.500V5.500h-3V7z" /></g>,
  imp: <g fill="none" stroke="#ddd" strokeWidth="2.200"><path d="M5 3h13v15H3v-6" /><path d="M11 11c0-4-4-5-7-5" /><path d="M7 2L2 6l5 4z" fill="#ddd" stroke="none" /></g>,
  chk: <g><path d="M1 2h18v12l-9 5-9-5z" fill="#ddd" /><path d="M5 8l4 4 6-7" stroke="#333" strokeWidth="2.200" fill="none" /></g>,
  col: <g fill="#d8d8d8"><path d="M2 8h5v4h6V8h5v11H2z" /><rect x="8" y="4" width="4" height="6" /><circle cx="12" cy="3" r="2" /></g>,
  ren: <g fill="#d8d8d8"><circle cx="11" cy="7" r="5" /><path d="M2 18c1-6 4-6 9-6s8 0 9 6z" /><path d="M1 15c0-4 2-6 5-6" stroke="#d8d8d8" fill="none" /></g>,
  abc: <g><rect x="1" y="1" width="18" height="18" fill="#ddd" /><text x="10" y="13" textAnchor="middle" fontSize="6.500" fontWeight="700" fill="#444" fontFamily={SANS}>ABC</text></g>,
  ext: <g fill="#d8d8d8"><path d="M6 1l4 6H8l3 5H1l3-5H2zM15 5l3 5h-2l3 5H11l3-5h-2zM0 16h20v3H0z" /></g>,
  lock: <g fill="#d8d8d8"><path d="M3 8h14v11H3z" /><path d="M6 8V5a4 4 0 0 1 8 0v3" fill="none" stroke="#d8d8d8" strokeWidth="2" /><circle cx="10" cy="13" r="2" fill="#333" /></g>,
  tmpl: <g fill="#d8d8d8"><path d="M8 2h4l1 3 3-1 2 3-2 2 3 2-2 4-3-1-1 4H9l-1-3-3 1-2-4 2-2-3-2 2-3 3 1z" /></g>,
};
const HI = ({ k }) => <HeadIcon><svg viewBox="0 0 20 20" width="20" height="20">{hi[k]}</svg></HeadIcon>;
const navs = ['文件', '编辑', '选择', '显示', '变换', '动画', '模型', '室内', '室外', '材质', '灯光', '相机', '修改', '实用', '素材'];
const collapsed = [['col', '收集并指定'], ['ren', '批量重命名'], ['abc', '资源处理'], ['ext', '外部参照转换'], ['lock', '加密解密'], ['tmpl', '场景模板']];

/* ---------- viewport ---------- */
const Viewport = styled.div`flex:1;min-width:0;position:relative;overflow:hidden;background:#222;`;
const SceneSvg = styled.svg`display:block;`;
const poly = (pts, fill, extra = {}) => <polygon points={pts} fill={fill} {...extra} />;
const ln = (a, b, c, d, col = '#333', w = 1) => <line x1={a} y1={b} x2={c} y2={d} stroke={col} strokeWidth={w} />;
const rng = (() => { let s = 12345; return () => (s = (s * 16807) % 2147483647) / 2147483647; })();
const stripes = Array.from({ length: 150 }, (_, i) => ({ x: 908 + i * 2.46 + rng() * 1.5, o: 0.15 + rng() * 0.55, w: rng() > 0.75 ? 1.4 : 0.8 }));
const meshH = Array.from({ length: 14 }, (_, i) => 830 + i * 4);
const meshV = Array.from({ length: 28 }, (_, i) => 938 + i * 3);
const Scene = () => (
  <SceneSvg width="1839" height="1150" viewBox="278 182 1839 1150">
    <defs>
      <linearGradient id="bg" x1="0" y1="0" x2="0" y2="1"><stop offset="0" stopColor="#181818" /><stop offset="1" stopColor="#4b4b4b" /></linearGradient>
      <pattern id="hatch" width="3" height="3" patternUnits="userSpaceOnUse" patternTransform="rotate(45)"><rect width="3" height="3" fill="#d5d5d2" /><rect width="1.500" height="3" fill="#111" /></pattern>
      <pattern id="hatchL" width="3" height="3" patternUnits="userSpaceOnUse" patternTransform="rotate(45)"><rect width="3" height="3" fill="#d5d5d2" /><rect width=".7" height="3" fill="#777" /></pattern>
    </defs>
    <rect x="278" y="182" width="1839" height="1150" fill="url(#bg)" />
    {poly('278,182 1415,182 1433,1332 278,1332', '#d5d5d2')}
    {ln(1415, 182, 1433, 1332, '#222', 1)}
    {ln(441, 184, 429, 532, '#444', 3)}
    {ln(852.500, 184, 846.700, 537, '#333', 2)}
    {poly('278,533 848,543 848,597 278,588', '#858585')}
    {ln(278, 531, 848, 541, '#333', 1.500)}
    {ln(278, 692, 847, 699, '#555', 1)}
    {poly('278,707 845,715 845,754 278,747', '#858585')}
    {ln(278, 707, 845, 715, '#222', 1)}
    {ln(848, 597, 845, 715, '#555', 1)}
    {poly('278,1114 840,1112 840,1121 278,1121', '#7f7f7c')}
    {ln(278, 1122, 842, 1121, '#111', 1.500)}
    {ln(408, 1123, 401, 1332, '#555', 3)}
    {ln(840, 1122, 836, 1332, '#333', 1.500)}
    {ln(845, 716, 840, 1113, '#444', 1)}
    {ln(846, 716, 1405, 721, '#222', 1.500)}
    {ln(1397.600, 182, 1404, 720, '#333', 1.500)}
    {ln(1406, 722, 1411, 1119, '#333', 1)}
    {ln(842, 1120, 1411, 1119, '#222', 1.500)}
    {ln(1411, 1119, 1414, 1332, '#333', 1.500)}
    {poly('1327,730 1397.600,730 1342,766 1327,766', '#878787')}
    {poly('1342,766 1397.600,730 1403,1110 1345.500,1104', '#666')}
    {poly('1331,1103 1345,1103 1403,1110 1331,1110', '#8a8a8a')}
    {ln(1397.600, 730, 1403, 1110, '#222', 1)}
    {poly('855,725 906,725 903,1077 851,1077', '#000')}
    {poly('1277,729 1325,729 1329,1076 1279,1076', '#000')}
    {poly('851,1077 1329,1077 1331,1110 850,1110', '#b8b8b8')}
    {poly('907,726 1275,730 1277,1017 905,1017', '#c2c2c2')}
    {stripes.map((s, i) => <line key={i} x1={s.x} y1="742" x2={s.x} y2="1017" stroke="#fff" strokeOpacity={s.o} strokeWidth={s.w} />)}
    {[[970, 8], [1027, 9], [1139, 8], [1197, 10]].map(([x, w]) => <rect key={x} x={x} y="742" width={w} height="275" fill="#fff" />)}
    {poly('907,726 1275,730 1262,742 1168,742 1120,745 1040,745 1025,739 907,738', '#858585')}
    {poly('1262,742 1275,730 1277,1017 1264,1015', '#757575')}
    {ln(907, 776, 1262, 776, '#fff', .8)}
    {ln(907, 818, 1060, 818, '#fff', .8)}
    {ln(1060, 822, 1262, 820, '#fff', .6)}
    <rect x="1057" y="734" width="60" height="42" fill="#eee" />
    {Array.from({ length: 16 }, (_, i) => <line key={i} x1={1059 + i * 3.700} y1="734" x2={1059 + i * 3.700} y2="776" stroke="#cfcfcf" strokeWidth=".7" />)}
    <path d="M1071 778h30v22h-5v-10h-20v10h-5z" fill="#f4f4f4" />
    <path d="M936 828c20-6 65-6 86 0v53h-86z" fill="#f2f2f2" />
    {meshH.map(y => <line key={y} x1="936" x2="1022" y1={y} y2={y} stroke="#a5a5a5" strokeWidth=".6" />)}
    {meshV.map(x => <line key={x} x1={x} x2={x} y1="830" y2="882" stroke="#a5a5a5" strokeWidth=".6" />)}
    <circle cx="950" cy="852" r="7" fill="none" stroke="#fff" strokeWidth="2" />
    <path d="M946 866l-12 50" stroke="#d9d9d9" strokeWidth="7" />
    <rect x="941" y="878" width="77" height="136" rx="4" fill="#fafafa" />
    {Array.from({ length: 20 }, (_, i) => <line key={i} x1={945 + i * 3.500} x2={945 + i * 3.500} y1="880" y2="895" stroke="#aaa" strokeWidth=".6" />)}
    {Array.from({ length: 8 }, (_, i) => <line key={i} x1={952 + i * 7} x2={952 + i * 7} y1="900" y2="1000" stroke="#e6e6e6" strokeWidth="1.500" />)}
    {Array.from({ length: 20 }, (_, i) => <line key={i} x1={938 + i * 3.500} x2={938 + i * 3.500} y1="992" y2="1006" stroke="#888" strokeWidth=".7" />)}
    <path d="M1030 832h12v50h-12z" fill="#b8b8b8" stroke="#fff" />
    <path d="M1041 902l-17 26h-6l16-26z" fill="#666" stroke="#fff" />
    <path d="M1012 930h9v82h-9z" fill="#ababab" stroke="#fff" />
    <path d="M856 533l469 10v186" fill="none" stroke="#f2f2f2" strokeWidth="1" />
    {ln(856, 533, 856, 726, '#f2f2f2', 1)}
    {poly('858,658 948,630 946,615 858,610', 'url(#hatch)')}
    {poly('1237,601 1323,580 1323,617 1237,618', 'url(#hatch)')}
    {poly('895,575 950,583 946,600 905,584', 'url(#hatchL)')}
    {poly('955,646 1222,650 1222,662 860,660', 'url(#hatch)')}
    {poly('1222,650 1322,664 1222,662', '#d5d5d2')}
    {poly('909,661 1273.500,666 1273.500,677 909,672', 'url(#hatch)')}
    {poly('909,661 1130,664 1130,670 909,672', '#000')}
    {poly('856,661 906,661 906,726 856,726', 'url(#hatch)')}
    {poly('858,564 1323,573 1323,665 858,658', 'none', { stroke: '#fff', strokeWidth: 1.500 })}
    {ln(858, 564, 948, 585, '#fff', 2)}
    {ln(1323, 574, 1237, 588, '#fff', 2)}
    {ln(858, 658, 948, 643, '#fff', 2)}
    {ln(1323, 665, 1237, 645, '#fff', 2)}
    <rect x="946" y="585" width="292" height="62" rx="9" fill="#d3d3d0" stroke="#fff" strokeWidth="2" />
    {ln(1093, 585, 1093, 647, '#eee', 1)}
    {ln(947, 613, 1238, 617, '#eee', 1)}
    {ln(846, 716, 1405, 721, '#222', 1.200)}
    {ln(1275, 665, 1277, 1076, '#f4f4f4', 1)}
    {ln(1323, 665, 1327, 1078, '#f4f4f4', 1)}
    {ln(908, 661, 904, 1077, '#f4f4f4', 1)}
    {poly('905,1017 1277,1017 1279,1077 905,1077', '#02020a')}
    {ln(905, 1016, 1277, 1016, '#fff', 1)}
    <text x="1092" y="1045" textAnchor="middle" fontFamily="Liberation Serif, serif" fontWeight="700" fontSize="19" fill="#101018" stroke="#d8d8d8" strokeWidth=".7">Miele</text>
    {ln(1049, 757, 1049, 852, '#2c2ccc', 1.500)}
    {poly('1049,725 1055,757 1043,757', '#0000c8')}
    <text x="1051" y="726" fontFamily={SANS} fontWeight="700" fontSize="11" fill="#2222cc">z</text>
    {ln(1049, 852, 1141, 851, '#e8e84a', 1.500)}
    {poly('1141,845 1176,851 1141,857', '#c80808')}
    <text x="1176" y="854" fontFamily={SANS} fontWeight="700" fontSize="11" fill="#d8c83a">x</text>
    <path d="M1048 809h44" stroke="#3a3ad0" fill="none" />
    <path d="M1092 809v44" stroke="#c03a3a" fill="none" />
    <path d="M1048 853h44M1048 809v44" stroke="#4ab04a" fill="none" />
    <circle cx="1043" cy="857" r="5" fill="#127a12" />
    <Hand x="1112" y="972" width="20" height="22" fill="#fff" stroke="#333" strokeWidth="1.500" />
    <path d="M2072 213h16l3 15h-22z" fill="#6e6e6e" />
    <path d="M2057 231h48" stroke="#777" />
    <rect x="278.500" y="181.500" width="1838" height="1150" fill="none" stroke="#6f6f50" strokeWidth="1.200" />
  </SceneSvg>
);

/* ---------- right ---------- */
const RightPanel = styled.div`width:443px;flex:none;background:#474747;display:flex;flex-direction:column;position:relative;`;
const RightDots = styled.div`height:2px;flex:none;margin:4px 0 0 3px;border-top:2px dotted #8f8f8f;`;
const RTabs = styled.div`height:31px;flex:none;margin-top:4px;display:flex;padding-left:5px;background:linear-gradient(#454545,#424242);border-bottom:1px solid #3c3c3c;`;
const RTabBtn = styled.div`width:37px;height:30px;display:flex;align-items:center;justify-content:center;background:${p => p.$on ? '#3b3b3b' : 'transparent'};`;
const RCol = styled.div`width:216px;margin-left:8px;display:flex;flex-direction:column;`;
const NameRow = styled.div`display:flex;margin-top:7px;gap:5px;`;
const NameInput = styled.div`width:188px;height:23px;background:#5b5b5b;color:#e4e4e4;font:700 12px/23px ${MONO};padding-left:6px;border-radius:1px;`;
const Swatch = styled.div`width:23px;height:23px;background:#000;`;
const ModDrop = styled.div`height:20px;margin-top:5px;background:#5c5c5c;color:#9a9a9a;font:12px ${MONO};display:flex;align-items:center;justify-content:space-between;padding:0 6px 0 3px;border-radius:2px;`;
const ModGrid = styled.div`display:grid;grid-template-columns:102px 103px;grid-auto-rows:22px;column-gap:5px;row-gap:5.200px;margin:18px 0 0 3px;`;
const ModBtn = styled.div`background:${p => p.$off ? '#505050' : '#5a5a5a'};color:${p => p.$off ? '#696969' : '#a8a8a8'};font:${p => p.$tight ? '10.500px' : '11.500px'}/22px ${MONO};text-align:center;border-radius:2px;white-space:nowrap;letter-spacing:${p => p.$tight ? '-.6px' : '-.3px'};box-shadow:0 1px 0 #3c3c3c;`;
const StackBox = styled.div`height:129px;margin-top:2px;border:1.500px solid #ececec;background:#444;flex:none;`;
const StackTools = styled.div`height:36px;display:flex;align-items:center;padding-left:8px;flex:none;`;
const SBtn = styled.div`width:${p => p.$w}px;height:28px;display:flex;align-items:center;justify-content:center;background:${p => p.$on ? '#546f97' : 'transparent'};border-radius:2px;margin-left:${p => p.$ml || 0}px;`;
const Divider = styled.div`height:1px;background:#595959;margin:15px 5px 0;position:relative;`;
const DivGrip = styled.div`position:absolute;left:95px;top:-2px;width:18px;height:5px;background:#474747;border-top:2px dotted #aaa;border-bottom:2px dotted #aaa;`;
const mods = [['编辑样条线', 1], ['编辑多边形'], ['挤出', 1], ['FFD 2x2x2'], ['FFD 3x3x3'], ['UVW 变换'], ['专业优化'], ['切片'], ['噪波'], ['壳'], ['对称'], ['弯曲'], ['涡轮平滑'], ['细分'], ['补洞'], ['切角'], ['扫描', 1], ['FloorGenerator[地', 0, 1], ['UVW 贴图'], ['Unwrap Pro'], ['FFD 4x4x4']];

/* ---------- status ---------- */
const StatusBar = styled.div`height:61px;flex:none;display:flex;background:#484848;`;
const Thumb = styled.div`width:116px;margin:3px 0 2px 3px;display:flex;flex-direction:column;flex:none;`;
const ThumbTop = styled.div`height:27px;background:#dcc4c5;border-bottom:1px solid #8a8a8a;`;
const ThumbBottom = styled.div`height:28px;background:#fdfdff;color:#4a4ac8;font:12px/28px ${MONO};white-space:nowrap;padding-left:3px;letter-spacing:-.3px;`;
const ThumbGap = styled.div`width:6px;flex:none;background:#3a3a3a;`;
const Msg = styled.div`width:1377px;flex:none;padding:9px 0 0 3px;display:flex;flex-direction:column;gap:13px;color:#b4b4b4;font:12px ${MONO};letter-spacing:.4px;`;
const Coords = styled.div`width:502px;flex:none;display:flex;flex-direction:column;padding-top:5px;`;
const CRow = styled.div`display:flex;align-items:center;height:${p => p.$h}px;margin-top:${p => p.$mt || 0}px;padding-left:${p => p.$pl || 0}px;color:#a4a4a4;font:11.500px ${MONO};white-space:nowrap;`;
const Snap = styled.div`width:25px;height:25px;background:#5a93cf;display:flex;align-items:center;justify-content:center;border-radius:2px;position:relative;`;
const CInput = styled.div`width:79px;height:22px;background:#636363;color:#bcbcbc;font:11px/20px ${MONO};padding-left:3px;margin:0 6px 0 4px;position:relative;letter-spacing:-.4px;&::after{content:"";position:absolute;right:3px;top:4px;border-left:3px solid transparent;border-right:3px solid transparent;border-bottom:5px solid #ddd;}&::before{content:"";position:absolute;right:3px;bottom:4px;border-left:3px solid transparent;border-right:3px solid transparent;border-top:5px solid #ddd;}`;
const Spacer = styled.div`width:${p => p.$w}px;flex:none;display:flex;justify-content:center;align-items:center;`;
const RedDot = styled.div`width:10px;height:10px;border-radius:50%;background:#e54848;`;
const ZeroBtn = styled.div`width:20px;height:22px;background:#f0f0f0;color:#222;border-radius:9px;font:700 12px/22px ${SANS};text-align:center;`;
const Play = styled.div`width:163px;flex:none;display:flex;flex-direction:column;padding-top:3px;`;
const PRow = styled.div`display:flex;align-items:center;height:${p => p.$h}px;padding-left:${p => p.$pl || 0}px;`;
const FrameInput = styled.div`width:81px;height:19px;background:#636363;color:#aaa;font:11px ${MONO};padding:1px 4px;margin:0 6px 0 10px;position:relative;`;
const BigKey = styled.div`width:44px;height:52px;margin:4px 6px 0 0;background:#626262;border-radius:3px;display:flex;align-items:center;justify-content:center;flex:none;`;
const KeyCol = styled.div`width:76px;flex:none;display:flex;flex-direction:column;padding-top:4px;gap:2px;`;
const KeyBtn = styled.div`height:24px;background:#5a5a5a;color:#9a9a9a;font:11.500px/24px ${MONO};text-align:center;border-radius:2px;letter-spacing:-.3px;`;
const SetCol = styled.div`width:129px;margin-left:3px;flex:none;display:flex;flex-direction:column;padding-top:4px;`;
const SetDrop = styled.div`height:16px;background:#666;color:#a5a5a5;font:11.500px/16px ${MONO};display:flex;justify-content:space-between;align-items:center;padding:0 5px;`;
const SetRow = styled.div`display:flex;margin-top:10px;`;
const FilterBtn = styled.div`width:78px;height:24px;background:#5a5a5a;color:#9a9a9a;font:11.500px/24px ${MONO};text-align:center;border-radius:2px;margin-left:3px;`;
const NavGrid = styled.div`display:grid;grid-template-columns:repeat(4,27px);grid-auto-rows:27px;margin:2px 0 0 18px;justify-items:center;align-items:center;`;

/* ---------- taskbar ---------- */
const Taskbar = styled.div`height:47px;flex:none;background:#101010;display:flex;align-items:center;position:relative;color:#eee;`;
const TaskApp = styled.div`width:${p => p.$w}px;height:47px;margin-left:${p => p.$ml}px;flex:none;display:flex;align-items:center;justify-content:center;position:relative;${p => p.$u ? `&::after{content:"";position:absolute;left:0;right:0;bottom:0;height:3px;background:#b8b8b8;}` : ''}`;
const Tray = styled.div`margin-left:auto;display:flex;align-items:center;width:280px;`;
const TrayIcon = styled.div`width:27.500px;display:flex;justify-content:center;flex:none;`;
const Lang = styled.div`font:16px ${SANS};color:#eee;width:27px;text-align:center;margin-left:1px;flex:none;`;
const Clock = styled.div`margin-left:3px;width:80px;text-align:right;font:13.500px/20px ${SANS};color:#eee;padding-right:6px;`;
const WatermarkWrap = styled.div`position:absolute;left:10px;top:1391px;display:flex;align-items:center;gap:14px;opacity:.32;pointer-events:none;`;
const WmText = styled.div`font:700 40px/36px ${SANS};color:#999;letter-spacing:3px;`;

const Tiny = ({ d, s = 20, c = '#ddd', sw = 1.800, fill = 'none', vb = 20 }) => <svg viewBox={`0 0 ${vb} ${vb}`} width={s} height={s}><path d={d} fill={fill} stroke={fill === 'none' ? c : 'none'} strokeWidth={sw} /></svg>;

export default function App() {
  return (
    <Page>
      <Global />
      <TitleBar>
        <AppBadge>3</AppBadge>
        <TitleSeg $w={137}>{'案例一的资料.max  -'}</TitleSeg>
        <TitleSeg $w={196}>{'当前文件大小: 2.20733 GB   -'}</TitleSeg>
        <TitleSeg $w={204}>{'上次保存时间: 昨天 21:10:37  |'}</TitleSeg>
        <TitleSeg $w={112}>{'YanJiCG.Com   -'}</TitleSeg>
        <TitleSeg $w={170}>Autodesk 3ds Max 2023</TitleSeg>
        <TitleFill />
        <WinBtns>
          <WinBtn><Minus size={15} /></WinBtn>
          <WinBtn><Copy size={13} /></WinBtn>
          <WinBtn><X size={15} /></WinBtn>
        </WinBtns>
      </TitleBar>
      <MenuBar>
        {menus.map(([t, x], i) => {
          const next = i < menus.length - 1 ? menus[i + 1][1] : x + 60;
          return <Menu key={t} $w={next - x}>{t}</Menu>;
        })}
        <LoginWrap>
          <svg width="18" height="20" viewBox="0 0 18 20"><circle cx="9" cy="6" r="4" fill="#f4f4f4" /><path d="M2 19c0-6 3-8 7-8s7 2 7 8z" fill="#f4f4f4" /></svg>
          <LoginText>登录</LoginText><Caret $c="#111" />
        </LoginWrap>
        <Workspace>工作区:<WsDrop><span>默认 - 复制</span><Caret /></WsDrop></Workspace>
      </MenuBar>
      <Rows>
        <ToolRow $h={39}><Grip />{layout(row1)}</ToolRow>
        <ToolRow $h={37}><Grip />{layout(row2)}</ToolRow>
      </Rows>
      <TabsBar>
        <RTab $w={68}>建模</RTab><RTab $w={90} $ml={4}>自由形式</RTab><RTab $w={72} $ml={18}>选择</RTab><RTab $w={90} $ml={16}>对象绘制</RTab><RTab $w={62} $ml={14} $pl={18} $on>填充</RTab>
        <RTab $w={40} $ml={20}><svg width="26" height="14" viewBox="0 0 26 14"><rect x="1" y="1" width="14" height="11" rx="2" fill="#ddd" /><path d="M5 4h6l-3 5z" fill="#333" /><path d="M19 5h5l-2.500 4z" fill="#bbb" /></svg></RTab>
      </TabsBar>
      <SubBar>
        <SubBtn $w={55}>定义流</SubBtn><SubBtn $w={97}>定义空闲区域</SubBtn><SubBtn $w={40}>模拟</SubBtn><SubBtn $w={40}>显示</SubBtn><SubBtn $w={98}>编辑选定对象</SubBtn>
      </SubBar>
      <Strip />
      <Main>
        <LeftStrip>
          <Dots />
          <BearWrap>
            <svg viewBox="0 0 38 38" width="38" height="38"><circle cx="19" cy="19" r="18" fill="#5b97df" /><path d="M11 11c2-3 4-1 5-1h6c1 0 3-2 5 1 1 2 0 3-1 4 2 8-1 15-7 15s-9-7-7-15c-1-1-2-2-1-4z" fill="#f5f5f0" /><circle cx="16" cy="19" r="1" fill="#444" /><circle cx="22" cy="19" r="1" fill="#444" /><circle cx="19" cy="23" r="1" fill="#d08080" /></svg>
          </BearWrap>
          <Rdf>RDF3</Rdf>
          <NavItem>渲染</NavItem>
          {navs.map((t, i) => <NavItem key={t} $on={i === 0}>{t}</NavItem>)}
          <NavGear>
            <svg viewBox="0 0 33 33" width="33" height="33"><circle cx="16.500" cy="16.500" r="15" fill="none" stroke="#6a6a6a" strokeWidth="1.800" /><g stroke="#6a6a6a" strokeWidth="3"><path d="M16.500 9v15M10 12.500l13 8M23 12.500l-13 8" /></g><circle cx="16.500" cy="16.500" r="2.500" fill="#3d3d3d" /></svg>
          </NavGear>
        </LeftStrip>
        <LeftPanel>
          <Card $h={110} $mb={10}>
            <CardHead $h={32}><HI k="save" />安全保存</CardHead>
            <CheckRow $mt={9}><Chk on w={87}>清理垃圾</Chk><Chk on w={87}>释放内存</Chk><Chk on w={56}>备份</Chk></CheckRow>
            <BtnRow $mt={8} $pl={17} $gap={12}>
              <PBtn $w={116} $ic>安全保存<ArrowUp size={13} strokeWidth={3} color="#ccc" /></PBtn>
              <PBtn $w={70} $ic>目录<ArrowUp size={13} strokeWidth={3} color="#ccc" /></PBtn>
            </BtnRow>
            <ChevD><ChevronDown size={16} /></ChevD>
          </Card>
          <Card $h={142} $mb={8}>
            <CardHead $h={26}><HI k="box" />打包</CardHead>
            <CheckRow $mt={11}><Chk w={71}>粒子流</Chk><Chk w={70}>汉转拼</Chk><Chk w={80}>重名处理</Chk></CheckRow>
            <SelRow $mt={11}>
              <SelLabel>格式</SelLabel><Sel $w={67} $mr={14}>RAR<ChevronDown size={15} /></Sel>
              <SelLabel>版本</SelLabel><Sel $w={63} $mr={0}>2020<ChevronDown size={15} /></Sel>
            </SelRow>
            <BtnRow $mt={12} $pl={6} $gap={12}><PBtn $w={63}>场景</PBtn><PBtn $w={64}>所选</PBtn><PBtn $w={64}>更多...</PBtn></BtnRow>
            <ChevD><ChevronDown size={16} /></ChevD>
          </Card>
          <Card $h={29} $mb={6}><CardHead $h={29}><HI k="imp" />导入导出</CardHead><ChevR><ChevronRight size={16} /></ChevR></Card>
          <Card $h={401} $mb={7}>
            <CardHead $h={28}><HI k="chk" />检查丢失资源</CardHead>
            <BtnRow $mt={7} $pl={11} $gap={18}><PBtn $w={94}>资源管理</PBtn><PBtn $w={92}>检查丢失</PBtn></BtnRow>
            <Area />
            <CheckRow $mt={11}><Chk on w={58}>贴图</Chk><Chk on w={58}>代理</Chk><Chk on w={58}>光子</Chk><Chk on w={48}>IES</Chk></CheckRow>
            <CheckRow $mt={8}><Chk w={70}>点缓存</Chk><Chk on w={70}>粒子流</Chk><Chk on w={80}>其它资源</Chk></CheckRow>
            <BtnRow $mt={9} $pl={6} $gap={9}><PBtn $w={47}>搜索</PBtn><PBtn $w={47}>导入</PBtn><PBtn $w={49}>选取</PBtn><PBtn $w={48}>清除</PBtn></BtnRow>
            <ChevD><ChevronDown size={16} /></ChevD>
          </Card>
          {collapsed.map(([k, t]) => <Card key={t} $h={29} $mb={6}><CardHead $h={29}><HI k={k} />{t}</CardHead><ChevR><ChevronRight size={16} /></ChevR></Card>)}
        </LeftPanel>
        <Viewport><Scene /></Viewport>
        <RightPanel>
          <RightDots />
          <RTabs>
            <RTabBtn><Plus size={24} color="#d0d0d0" strokeWidth={3} /></RTabBtn>
            <RTabBtn $on><Ic k="tabCurve" s={24} /></RTabBtn>
            <RTabBtn><Ic k="tabHier" s={24} /></RTabBtn>
            <RTabBtn><Ic k="tabMotion" s={24} /></RTabBtn>
            <RTabBtn><Monitor size={22} color="#bcbcbc" fill="#bcbcbc" /></RTabBtn>
            <RTabBtn><Wrench size={21} color="#bcbcbc" fill="#bcbcbc" /></RTabBtn>
          </RTabs>
          <RCol>
            <NameRow><NameInput>组2146566798</NameInput><Swatch /></NameRow>
            <ModDrop><span>修改器列表</span><Caret /></ModDrop>
            <ModGrid>{mods.map(([t, off, tight]) => <ModBtn key={t} $off={off} $tight={tight}>{t}</ModBtn>)}</ModGrid>
            <StackBox />
            <StackTools>
              <SBtn $w={28}><Tiny d="M4 10l7-5v3h5v4h-5v3z" fill="#5a5a5a" /></SBtn>
              <SBtn $w={30} $ml={7} $on><Tiny d="M8 3h4v14H8z" fill="#4a4a4a" /></SBtn>
              <SBtn $w={30} $ml={7}><Tiny d="M2 9l6-5 9 5-3 7-7 1z" fill="#555" /></SBtn>
              <SBtn $w={26} $ml={5}><Tiny d="M3 5h14v11H3zM6 6v9M10 6v9M14 6v9" c="#5f5f5f" sw={2} /></SBtn>
              <SBtn $w={28} $ml={12}><svg viewBox="0 0 24 24" width="24" height="24"><rect x="2" y="6" width="16" height="16" fill="none" stroke="#ddd" strokeWidth="1.800" /><path d="M2 11h16M10 11v11M5 15h3M13 15h3M5 19h3M13 19h3" stroke="#ddd" strokeWidth="1.500" /><path d="M12 13l9-10 2 2-9 10z" fill={O} /></svg></SBtn>
            </StackTools>
            <Divider><DivGrip /></Divider>
          </RCol>
        </RightPanel>
      </Main>
      <StatusBar>
        <Thumb><ThumbTop /><ThumbBottom>"[XR100] 不加载</ThumbBottom></Thumb>
        <ThumbGap />
        <Msg><div>选择了 1 个 组</div><div>单击并拖动以选择并移动对象</div></Msg>
        <Coords>
          <CRow $h={25}>
            <Snap><Ic k="tabCurve" s={20} /></Snap>
            <Spacer $w={36}><Lock size={17} color="#ddd" fill="#ddd" /></Spacer>
            <Spacer $w={26}><svg viewBox="0 0 20 20" width="17" height="17"><rect x="2" y="2" width="16" height="16" fill="none" stroke="#ccc" strokeWidth="1.500" /><circle cx="10" cy="10" r="3" fill="none" stroke="#ccc" /></svg></Spacer>
            <Spacer $w={15}>X:</Spacer><CInput>-800.79mm</CInput>
            <Spacer $w={12}>Y:</Spacer><CInput>-1310.46mm</CInput>
            <Spacer $w={10}>Z:</Spacer><CInput>1205.35mm</CInput>
            <span>栅格 = 10.0mm</span>
          </CRow>
          <CRow $h={22} $mt={6} $pl={242}>
            <Spacer $w={20}><svg viewBox="0 0 20 20" width="20" height="20"><rect x="0" y="0" width="20" height="20" fill="#606060" /><circle cx="10" cy="10" r="7" fill="#e8e8e8" /><path d="M10 3v14" stroke="#555" /><path d="M10 10h7a7 7 0 0 1-7 7z" fill="#555" /></svg></Spacer>
            <Spacer $w={38}>禁用:</Spacer><RedDot /><Spacer $w={11} /><ZeroBtn>0</ZeroBtn><Spacer $w={20} />
            <svg viewBox="0 0 20 20" width="16" height="16"><path d="M10 2l7 4v8l-7 4-7-4V6zM3 6l7 4 7-4M10 10v8" fill="none" stroke="#ccc" strokeWidth="1.300" /></svg>
            <Spacer $w={14} /><span>添加时间标记</span>
          </CRow>
        </Coords>
        <Play>
          <PRow $h={32} $pl={8}>
            <Spacer $w={30.5}><Tiny d="M3 4h2v12H3zM13 4v12L7 10zM19 4v12l-6-6z" fill="#ddd" /></Spacer>
            <Spacer $w={28.5}><Tiny d="M9 4v12L3 10zM11 4h2v12h-2zM15 4h2v12h-2z" fill="#ddd" /></Spacer>
            <Spacer $w={26}><Tiny d="M3 2l15 8-15 8z" fill="#e8e8e8" s={22} /></Spacer>
            <Spacer $w={28}><Tiny d="M3 4h2v12H3zM7 4h2v12H7zM11 4l6 6-6 6z" fill="#ddd" /></Spacer>
            <Spacer $w={30}><Tiny d="M1 4l6 6-6 6zM7 4l6 6-6 6zM15 4h2v12h-2z" fill="#ddd" /></Spacer>
          </PRow>
          <PRow $h={22} $pl={15}>
            <Tiny d="M9 5v10L3 10zM11 5l6 5-6 5z" fill="#ddd" s={16} />
            <FrameInput>0</FrameInput>
            <svg viewBox="0 0 20 20" width="20" height="20"><circle cx="8" cy="8" r="6" fill="#ddd" /><path d="M8 4v4h3" stroke="#333" fill="none" /><circle cx="14" cy="14" r="4" fill="none" stroke={O} strokeWidth="2.500" /></svg>
          </PRow>
        </Play>
        <BigKey><svg viewBox="0 0 40 48" width="36" height="44"><path d="M16 4h8v16h14v8H24v8h-8v-8H2v-8h14z" fill="#dcdcdc" /><circle cx="25" cy="34" r="4.500" fill="none" stroke={T} strokeWidth="2.500" /><path d="M27 29l8-10" stroke={T} strokeWidth="2.500" /></svg></BigKey>
        <KeyCol><KeyBtn>自动</KeyBtn><KeyBtn>设置关键点</KeyBtn></KeyCol>
        <SetCol>
          <SetDrop><span>选定对象</span><Caret /></SetDrop>
          <SetRow>
            <Spacer $w={27}><svg viewBox="0 0 24 24" width="22" height="22"><path d="M2 22c5 0 5-18 8-18 2 0 2 5 2 5s1-5 3-5c3 0 3 18 7 18" fill="none" stroke={T} strokeWidth="2" /></svg></Spacer>
            <FilterBtn>过滤器...</FilterBtn>
          </SetRow>
        </SetCol>
        <NavGrid>
          <Search size={21} color="#e0e0e0" />
          <svg viewBox="0 0 20 20" width="20" height="20"><path d="M7 2h11v11H7z" fill={T} /><path d="M12 2v11M7 7h11" stroke="#444" /><circle cx="7" cy="13" r="4" fill="none" stroke="#ddd" strokeWidth="1.800" /></svg>
          <svg viewBox="0 0 20 20" width="20" height="20"><path d="M2 6V2h4M14 2h4v4M18 14v4h-4M6 18H2v-4" fill="none" stroke="#ddd" strokeWidth="1.800" /><circle cx="10" cy="10" r="5" fill={T} /></svg>
          <svg viewBox="0 0 20 20" width="20" height="20"><path d="M3 17l6-12 8-3-2 9z" fill="#ddd" /><path d="M12 2l6 6-3 3-6-6z" fill={T} /></svg>
          <svg viewBox="0 0 20 20" width="20" height="20"><path d="M4 3l12 7-12 7" fill="none" stroke="#e4e4e4" strokeWidth="2" /></svg>
          <Hand size={21} color="#eee" fill="#eee" />
          <svg viewBox="0 0 20 20" width="20" height="20"><circle cx="10" cy="10" r="7" fill="#ddd" /><path d="M4 14c4-1 9-5 12-10" stroke={T} strokeWidth="2" fill="none" /></svg>
          <svg viewBox="0 0 20 20" width="20" height="20"><rect x="2" y="2" width="16" height="16" fill="#eee" /><path d="M2 18L18 2v16z" fill="#333" /></svg>
        </NavGrid>
      </StatusBar>
      <Taskbar>
        <TaskApp $w={36} $ml={10}>
          <svg viewBox="0 0 18 18" width="17" height="17"><path d="M0 2.500 7.500 1.500v7H0zM8.500 1.300 18 0v8.500H8.500zM0 9.500h7.500v7L0 15.500zM8.500 9.500H18V18l-9.500-1.300z" fill="#f2f2f2" /></svg>
        </TaskApp>
        <TaskApp $w={56} $ml={14} $u>
          <svg viewBox="0 0 30 30" width="30" height="30"><path d="M3 4l12-3 12 3v18l-12 7-12-7z" fill="#3a9ed0" /><text x="15" y="15" textAnchor="middle" fontSize="13" fontWeight="700" fill="#fff" fontFamily={SANS}>3</text><text x="15" y="25" textAnchor="middle" fontSize="6" fontWeight="700" fill="#dff" fontFamily={SANS}>MAX</text></svg>
        </TaskApp>
        <TaskApp $w={47} $ml={6} $u>
          <svg viewBox="0 0 28 28" width="28" height="28"><circle cx="14" cy="14" r="12.500" fill="#111" stroke="#eee" strokeWidth="1.500" /><circle cx="14" cy="14" r="7.500" fill="#e22" /></svg>
        </TaskApp>
        <TaskApp $w={47} $ml={11} $u>
          <svg viewBox="0 0 30 30" width="30" height="30"><circle cx="13" cy="13" r="10" fill="none" stroke="#2a8de0" strokeWidth="3" /><path d="M8 21l-2 5 6-3" fill="#2a8de0" /><circle cx="22" cy="18" r="3" fill="#e6a32c" /><circle cx="18" cy="22" r="2.500" fill="#37b04a" /><circle cx="25" cy="22" r="2.500" fill="#2a8de0" /><circle cx="22" cy="26" r="2.500" fill="#d9573a" /></svg>
        </TaskApp>
        <Tray>
          <TrayIcon><Tiny d="M5 12l5-5 5 5" s={18} /></TrayIcon>
          <TrayIcon><svg viewBox="0 0 20 20" width="18" height="18"><path d="M3 3h12v10H3zM1 16h10" fill="none" stroke="#ddd" strokeWidth="1.500" /></svg></TrayIcon>
          <TrayIcon><svg viewBox="0 0 12 24" width="10" height="22"><rect x="2" y="1" width="8" height="16" rx="3" fill="#e6e6e6" /><path d="M6 17v6" stroke="#aaa" strokeWidth="2" /></svg></TrayIcon>
          <TrayIcon><svg viewBox="0 0 20 20" width="20" height="20"><circle cx="9" cy="9" r="6.500" fill="none" stroke="#2a8de0" strokeWidth="2.400" /><circle cx="14" cy="13" r="2" fill="#e6a32c" /><circle cx="11" cy="16" r="1.700" fill="#37b04a" /><circle cx="16" cy="17" r="1.700" fill="#d9573a" /></svg></TrayIcon>
          <TrayIcon><svg viewBox="0 0 14 22" width="13" height="21"><rect x="5" y="1" width="4" height="5" fill="#eab94a" /><rect x="3" y="6" width="8" height="8" fill="#d63a3a" /><rect x="4" y="14" width="6" height="6" fill="#eee" /></svg></TrayIcon>
          <TrayIcon><svg viewBox="0 0 20 20" width="18" height="18"><path d="M3 7h3l5-4v14l-5-4H3z" fill="none" stroke="#bbb" strokeWidth="1.300" /><path d="M14 7c1.500 2 1.500 4 0 6" stroke="#bbb" fill="none" /></svg></TrayIcon>
          <Lang>英</Lang>
          <Clock>上午 10:42<br />2024.02.28</Clock>
        </Tray>
      </Taskbar>
      <WatermarkWrap>
        <svg viewBox="0 0 52 40" width="52" height="36"><rect x="4" y="4" width="42" height="32" rx="7" fill="none" stroke="#999" strokeWidth="7" /></svg>
        <WmText>fafe.cc</WmText>
      </WatermarkWrap>
    </Page>
  );
}
